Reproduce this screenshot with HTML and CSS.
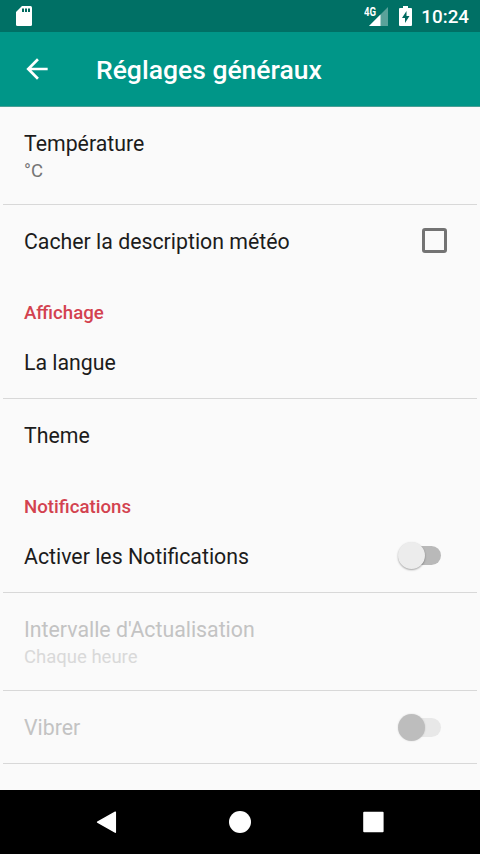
FILE: index.html
```html
<!DOCTYPE html>
<html lang="fr">
<head>
  <meta charset="UTF-8">
  <meta name="viewport" content="width=device-width, initial-scale=1">
  <title>Réglages généraux</title>
  <link rel="stylesheet" href="styles.css">
</head>
<body>

  <div class="status-bar">
    <svg class="sd-icon" width="16" height="20" viewBox="0 0 16 20">
      <path fill="#fff" d="M6 0h8.500a1.500 1.500 0 0 1 1.500 1.500v17a1.500 1.500 0 0 1-1.500 1.500h-13a1.500 1.500 0 0 1-1.500-1.500V6z"/>
      <path fill="#00695f" d="M6 2.500h2V6H6zM9 2.500h2V6H9zM12 2.500h2V6h-2z"/>
    </svg>
    <div class="status-right">
      <div class="signal">
        <span class="network">4G</span>
        <svg width="19" height="19" viewBox="0 0 19 19">
          <path fill="#fff" fill-opacity=".35" d="M19 0v19H0z"/>
          <path fill="#fff" d="M11.500 7.500V19H0z"/>
        </svg>
      </div>
      <svg class="battery" width="13" height="20" viewBox="0 0 13 20">
        <path fill="#fff" d="M4 0h5v2h3a1 1 0 0 1 1 1v16a1 1 0 0 1-1 1H1a1 1 0 0 1-1-1V3a1 1 0 0 1 1-1h3z"/>
        <path fill="#00695f" d="M7.500 5L3 12h3v5l4.500-7h-3z"/>
      </svg>
      <span class="clock">10:24</span>
    </div>
  </div>

  <header class="toolbar">
    <svg class="back" width="32" height="32" viewBox="0 0 24 24">
      <path fill="#fff" d="M20 11H7.830l5.590-5.590L12 4l-8 8 8 8 1.410-1.410L7.830 13H20v-2z"/>
    </svg>
    <h1>Réglages généraux</h1>
  </header>

  <main class="settings">
    <div class="row tall divider">
      <div class="text">
        <div class="title">Température</div>
        <div class="summary">°C</div>
      </div>
    </div>
    <div class="row">
      <div class="title">Cacher la description météo</div>
      <span class="checkbox"></span>
    </div>

    <h2>Affichage</h2>
    <div class="row divider">
      <div class="title">La langue</div>
    </div>
    <div class="row">
      <div class="title">Theme</div>
    </div>

    <h2>Notifications</h2>
    <div class="row divider">
      <div class="title">Activer les Notifications</div>
      <span class="switch"></span>
    </div>
    <div class="row tall divider disabled">
      <div class="text">
        <div class="title">Intervalle d'Actualisation</div>
        <div class="summary">Chaque heure</div>
      </div>
    </div>
    <div class="row divider disabled">
      <div class="title">Vibrer</div>
      <span class="switch"></span>
    </div>
  </main>

  <nav class="nav-bar">
    <svg width="24" height="24" viewBox="0 0 24 24">
      <path fill="#fff" stroke="#fff" stroke-width="1.500" stroke-linejoin="round" d="M20.300 2.200v20L2.600 12.200z"/>
    </svg>
    <svg width="24" height="24" viewBox="0 0 24 24">
      <circle fill="#fff" cx="12" cy="12" r="11"/>
    </svg>
    <svg width="24" height="24" viewBox="0 0 24 24">
      <rect fill="#fff" x="2.200" y="1.800" width="20.400" height="20.400" rx="1"/>
    </svg>
  </nav>

</body>
</html>
```

FILE: styles.css
```css
* {
  box-sizing: border-box;
}

body {
  margin: 0;
  height: 854px;
  display: flex;
  flex-direction: column;
  overflow: hidden;
  font-family: Roboto, sans-serif;
  background: #fafafa;
  color: #1c1c1c;
}

.status-bar {
  height: 32px;
  padding: 0 11px 0 16px;
  display: flex;
  justify-content: space-between;
  align-items: center;
  background: #007065;
  color: #fff;
}

.status-right {
  display: flex;
  align-items: center;
}

.signal {
  position: relative;
  height: 19px;
  margin-right: 11px;
}

.signal svg,
.sd-icon,
.battery {
  display: block;
}

.network {
  position: absolute;
  left: -5px;
  top: 0;
  font-size: 12px;
  font-weight: 700;
  line-height: 11px;
  transform: scaleX(0.8);
  transform-origin: left;
}

.clock {
  margin-left: 9px;
  font-size: 18.8px;
  font-weight: 500;
  line-height: 32px;
  padding-top: 1px;
}

.toolbar {
  height: 75px;
  padding: 0 21px;
  display: flex;
  align-items: center;
  background: #009688;
  border-bottom: 1px solid #4a9f95;
}

h1 {
  margin: 1px 0 0 43px;
  font-size: 26.5px;
  font-weight: 500;
  color: #fff;
}

.settings {
  flex: 1;
}

.row {
  height: 73px;
  margin: 0 3px;
  padding: 0 30px 0 21px;
  display: flex;
  justify-content: space-between;
  align-items: center;
}

.tall {
  height: 98px;
}

.divider {
  border-bottom: 1px solid #d8d8d8;
}

.divider > .title {
  padding-top: 2px;
}

.text {
  padding-top: 3px;
}

.title {
  font-size: 21.3px;
  line-height: 28px;
}

.summary {
  font-size: 18.5px;
  line-height: 27px;
  color: #757575;
}

h2 {
  height: 48px;
  margin: 0;
  padding: 24px 24px 0;
  font-size: 18.67px;
  line-height: 22px;
  font-weight: 500;
  color: #d3424f;
}

.checkbox {
  width: 25px;
  height: 25px;
  margin-bottom: 2px;
  border: 3px solid #737373;
  border-radius: 3px;
}

.switch {
  position: relative;
  width: 36px;
  height: 19px;
  margin-right: 6px;
  border-radius: 10px;
  background: #b9b9b9;
}

.switch::before {
  content: "";
  position: absolute;
  left: -7px;
  top: -4px;
  width: 27px;
  height: 27px;
  border-radius: 50%;
  background: #ececec;
  box-shadow: 0 1px 2px rgba(0, 0, 0, 0.35);
}

.row:not(.disabled) .switch {
  margin-bottom: 1px;
}

.disabled .title {
  color: #c3c3c3;
}

.disabled .summary {
  color: #d9d9d9;
}

.disabled .switch {
  background: #e8e8e8;
}

.disabled .switch::before {
  background: #bdbdbd;
  box-shadow: 0 0 2px rgba(0, 0, 0, 0.15);
}

.nav-bar {
  height: 64px;
  padding: 0 95px;
  display: flex;
  justify-content: space-between;
  align-items: center;
  background: #000;
}
```
